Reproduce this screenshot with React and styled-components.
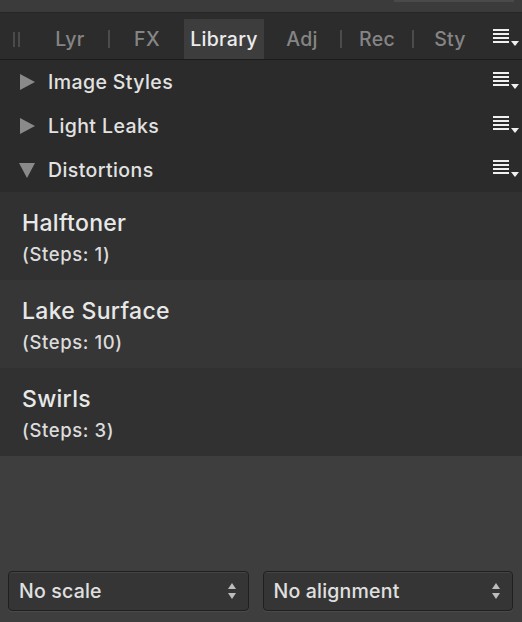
import React from 'react';
import styled, { createGlobalStyle } from 'styled-components';

const Global = createGlobalStyle`
  html, body { margin: 0; padding: 0; background: #3e3e3e; }
  body { font-family: Inter, "Open Sans", "Liberation Sans", sans-serif; }
  #root { height: 622px; }
`;

const Panel = styled.div`
  width: 522px;
  height: 622px;
  display: flex;
  flex-direction: column;
  background: #3e3e3e;
  overflow: hidden;
`;

const TopStrip = styled.div`
  height: 12px;
  background: #3b3b3b;
  border-bottom: 1px solid #262626;
  display: flex;
  justify-content: flex-end;
  padding-right: 8px;
`;

const FieldEdge = styled.div`
  width: 120px;
  height: 2px;
  background: #4a4a4a;
`;

const TabBar = styled.div`
  height: 46px;
  background: #2c2c2c;
  border-bottom: 1px solid #1b1b1b;
  display: flex;
  align-items: flex-end;
  position: relative;
`;

const Grip = styled.div`
  width: 32px;
  height: 40px;
  display: flex;
  align-items: center;
  justify-content: center;
  gap: 3px;
  &::before, &::after {
    content: '';
    width: 2px;
    height: 15px;
    background: #4a4a4a;
  }
`;

const Tab = styled.div`
  height: 40px;
  width: ${p => p.$w}px;
  display: flex;
  align-items: center;
  justify-content: center;
  font-size: 19.5px;
  font-weight: 500;
  letter-spacing: 0.3px;
  color: ${p => (p.$active ? '#ececec' : '#858585')};
  background: ${p => (p.$active ? '#3d3d3d' : 'transparent')};
`;

const Sep = styled.div`
  width: 2px;
  height: 40px;
  display: flex;
  align-items: center;
  &::before {
    content: '';
    width: 2px;
    height: 18px;
    background: #4c4c4c;
  }
`;

const MenuBtn = styled.div`
  position: absolute;
  right: 2px;
  top: 15px;
`;

const Group = styled.div`
  height: 44px;
  background: #2b2b2b;
  display: flex;
  align-items: center;
  padding-left: 20px;
  padding-right: 2px;
`;

const Arrow = styled.div`
  width: 0;
  height: 0;
  margin-right: 13px;
  ${p =>
    p.$open
      ? `border-left: 8px solid transparent; border-right: 8px solid transparent; border-top: 15px solid #8a8a8a; margin-left: -1px;`
      : `border-top: 8px solid transparent; border-bottom: 8px solid transparent; border-left: 15px solid #8a8a8a;`}
`;

const GroupLabel = styled.div`
  flex: 1;
  font-size: 19.5px;
  font-weight: 500;
  letter-spacing: 0.4px;
  color: #e2e2e2;
`;

const Item = styled.div`
  height: 88px;
  background: ${p => (p.$alt ? '#363636' : '#313131')};
  display: flex;
  flex-direction: column;
  justify-content: center;
  padding-left: 22px;
  padding-top: 3px;
  box-sizing: border-box;
`;

const ItemName = styled.div`
  font-size: 23px;
  font-weight: 500;
  letter-spacing: 0.3px;
  color: #e8e8e8;
  line-height: 28px;
`;

const ItemSteps = styled.div`
  font-size: 18.5px;
  font-weight: 500;
  letter-spacing: 0.6px;
  color: #dcdcdc;
  line-height: 24px;
  margin-top: 5px;
`;

const Spacer = styled.div`
  flex: 1;
`;

const Footer = styled.div`
  display: flex;
  gap: 14px;
  padding: 0 9px 11px 8px;
`;

const Select = styled.div`
  flex: ${p => p.$grow};
  height: 40px;
  box-sizing: border-box;
  border: 1px solid #1f1f1f;
  border-radius: 4px;
  background: #353535;
  box-shadow: inset 0 1px 0 #444, 0 1px 0 #4a4a4a;
  display: flex;
  align-items: center;
  padding: 0 10px;
  font-size: 19.5px;
  font-weight: 500;
  letter-spacing: 0.2px;
  color: #e0e0e0;
`;

const SelText = styled.span`
  flex: 1;
`;

const MenuIcon = () => (
  <svg width="28" height="22" viewBox="0 0 28 22">
    {[0, 4, 8, 12].map(y => (
      <rect key={y} x="1" y={y + 1} width="16" height="2" fill="#f0f0f0" />
    ))}
    <polygon points="19,13 27,13 23,18" fill="#f0f0f0" />
  </svg>
);

const Stepper = () => (
  <svg width="12" height="22" viewBox="0 0 12 22">
    <polygon points="6,3 10,9 2,9" fill="#bdbdbd" />
    <polygon points="2,13 10,13 6,19" fill="#bdbdbd" />
  </svg>
);

const groups = [
  { name: 'Image Styles', open: false },
  { name: 'Light Leaks', open: false },
  { name: 'Distortions', open: true },
];

const items = [
  { name: 'Halftoner', steps: 1 },
  { name: 'Lake Surface', steps: 10 },
  { name: 'Swirls', steps: 3 },
];

export default function App() {
  return (
    <Panel>
      <Global />
      <TopStrip>
        <FieldEdge />
      </TopStrip>
      <TabBar>
        <Grip />
        <Tab $w={76}>Lyr</Tab>
        <Sep />
        <Tab $w={74}>FX</Tab>
        <Tab $w={80} $active>Library</Tab>
        <Tab $w={76}>Adj</Tab>
        <Sep />
        <Tab $w={70}>Rec</Tab>
        <Sep />
        <Tab $w={72}>Sty</Tab>
        <MenuBtn>
          <MenuIcon />
        </MenuBtn>
      </TabBar>
      {groups.map(g => (
        <Group key={g.name}>
          <Arrow $open={g.open} />
          <GroupLabel>{g.name}</GroupLabel>
          <MenuIcon />
        </Group>
      ))}
      {items.map((it, i) => (
        <Item key={it.name} $alt={i % 2 === 1}>
          <ItemName>{it.name}</ItemName>
          <ItemSteps>(Steps: {it.steps})</ItemSteps>
        </Item>
      ))}
      <Spacer />
      <Footer>
        <Select $grow={240}>
          <SelText>No scale</SelText>
          <Stepper />
        </Select>
        <Select $grow={251}>
          <SelText>No alignment</SelText>
          <Stepper />
        </Select>
      </Footer>
    </Panel>
  );
}
